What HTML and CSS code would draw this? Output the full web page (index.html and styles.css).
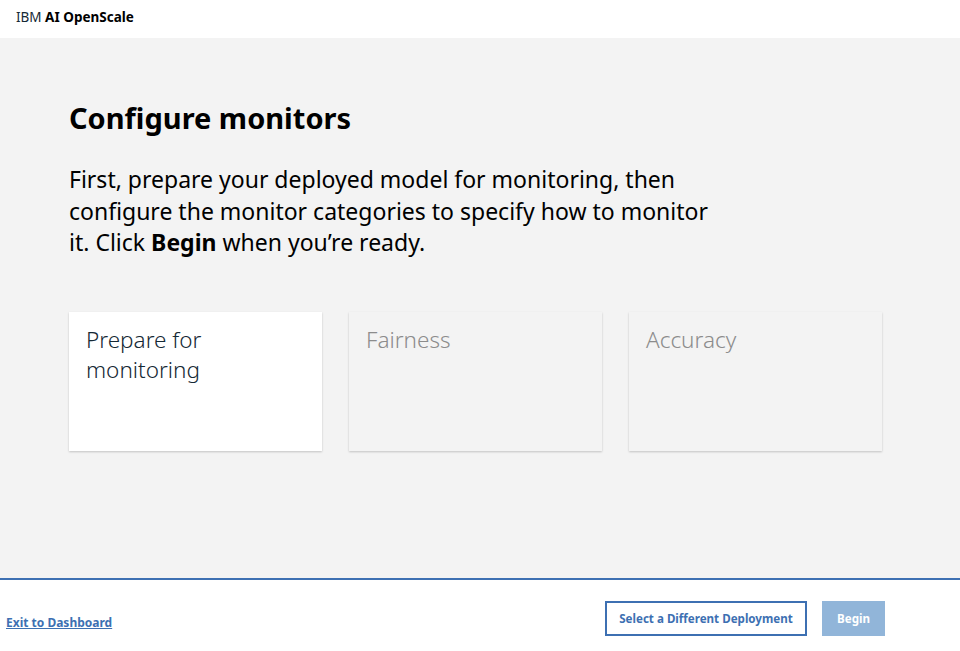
FILE: index.html
```html
<!DOCTYPE html>
<html lang="en">
<head>
<meta charset="utf-8">
<title>IBM AI OpenScale</title>
<link rel="stylesheet" href="styles.css">
</head>
<body>
<header class="topbar">
  <span class="brand">IBM <strong>AI OpenScale</strong></span>
</header>
<main class="main">
  <h1 class="title">Configure monitors</h1>
  <p class="intro">
    <span class="intro-line">First, prepare your deployed model for monitoring, then</span>
    <span class="intro-line">configure the monitor categories to specify how to monitor</span>
    <span class="intro-line"><span>it. Click</span> <strong>Begin</strong> <span>when you’re ready.</span></span>
  </p>
  <div class="cards">
    <div class="card card-active">Prepare for monitoring</div>
    <div class="card card-disabled">Fairness</div>
    <div class="card card-disabled">Accuracy</div>
  </div>
</main>
<footer class="footer">
  <a class="exit-link" href="#">Exit to Dashboard</a>
  <div class="actions">
    <button class="btn btn-secondary">Select a Different Deployment</button>
    <button class="btn btn-primary" disabled>Begin</button>
  </div>
</footer>
</body>
</html>
```

FILE: styles.css
```css
* { box-sizing: border-box; }
html, body { margin: 0; padding: 0; }
body {
  font-family: "Noto Sans", "Open Sans", sans-serif;
  color: #000;
  background: #fff;
  width: 960px;
  height: 651px;
  overflow: hidden;
}
.topbar {
  height: 38px;
  display: flex;
  align-items: center;
  padding: 0 0 4px 16px;
  background: #fff;
}
.brand {
  font-size: 13.5px;
  line-height: 16px;
  color: #152935;
}
.brand strong { font-weight: 700; color: #000; }
.main {
  height: 540px;
  background: #f3f3f3;
  padding: 61px 0 0 69px;
}
.title {
  margin: 0;
  font-size: 29px;
  line-height: 38px;
  font-weight: 700;
}
.intro {
  margin: 27px 0 0;
  font-size: 23px;
  line-height: 31.5px;
  font-weight: 400;
  max-width: 700px;
}
.intro-line { display: block; white-space: nowrap; }
.intro strong { font-weight: 700; }
.cards {
  display: flex;
  gap: 27px;
  margin-top: 53px;
}
.card {
  width: 253px;
  height: 139px;
  padding: 13px 17px;
  font-size: 22.5px;
  line-height: 30px;
  font-weight: 300;
  box-shadow: 0 1px 2px rgba(0,0,0,0.2);
}
.card-active { background: #fff; color: #152935; }
.card-disabled { background: #f3f3f3; color: #8c8c8c; }
.footer {
  height: 73px;
  border-top: 2px solid #3d70b2;
  background: #fff;
  display: flex;
  align-items: center;
  justify-content: space-between;
  padding: 0 75px 0 6px;
}
.exit-link {
  font-size: 12px;
  font-weight: 700;
  color: #3d70b2;
  text-decoration: underline;
  margin-top: 14px;
}
.actions {
  display: flex;
  gap: 15px;
  margin-top: 6px;
}
.btn {
  font-family: inherit;
  font-size: 11.6px;
  font-weight: 700;
  height: 35px;
  padding: 0;
  white-space: nowrap;
  cursor: pointer;
}
.btn-secondary {
  background: #fff;
  color: #3d70b2;
  border: 2px solid #3d70b2;
  width: 202px;
}
.btn-primary {
  background: #91b5d9;
  color: #fff;
  border: 1px solid #91b5d9;
  width: 63px;
}
```
